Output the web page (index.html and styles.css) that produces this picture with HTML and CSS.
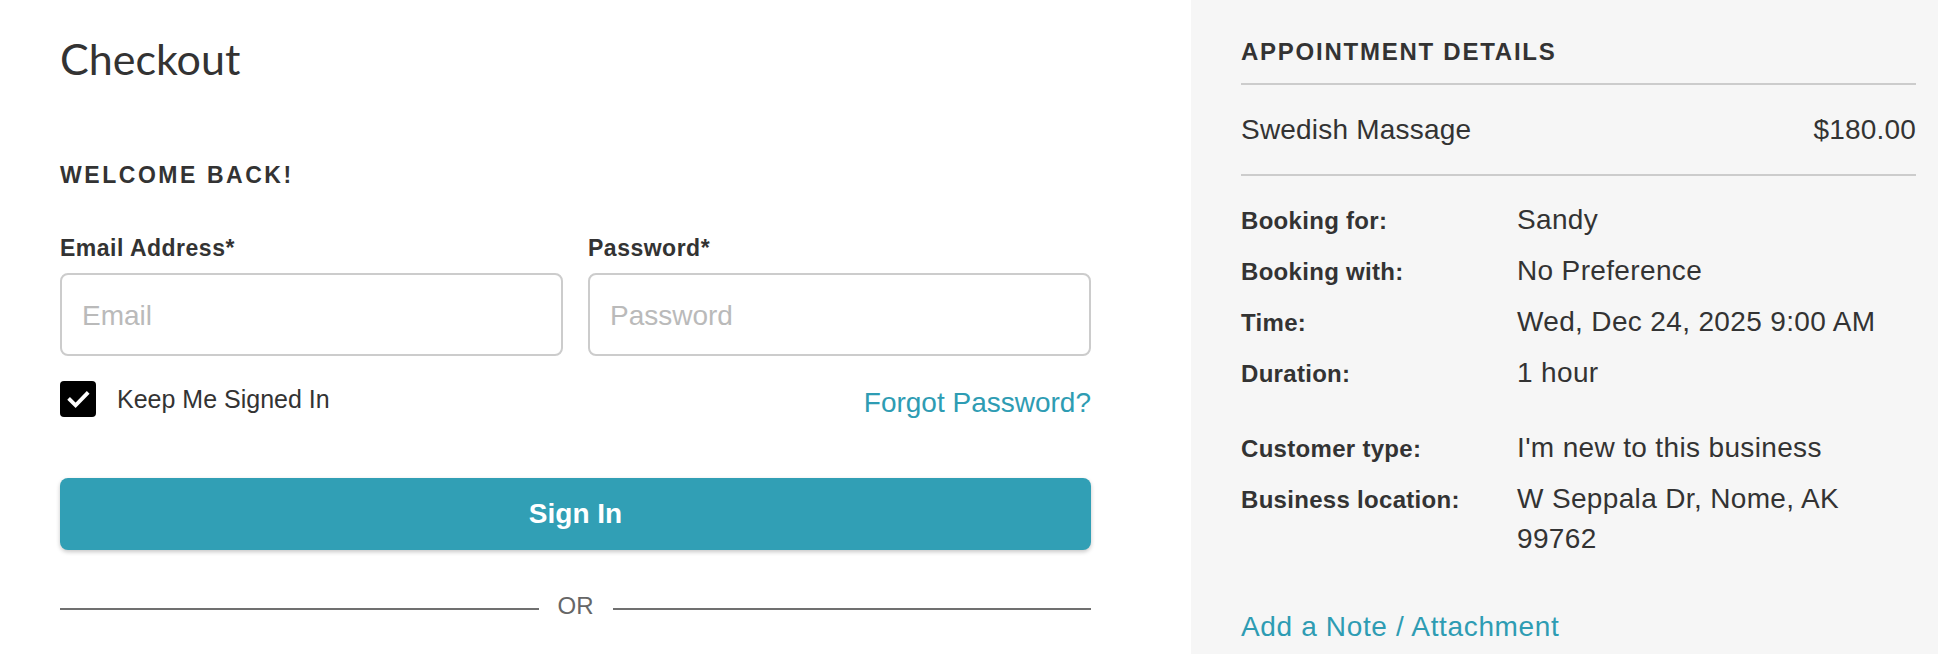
FILE: index.html
```html
<!DOCTYPE html>
<html lang="en">
<head>
<meta charset="utf-8">
<title>Checkout</title>
<link rel="stylesheet" href="styles.css">
</head>
<body>
<div class="page">
  <main class="main">
    <h1 class="title">Checkout</h1>
    <h2 class="section-title">WELCOME BACK!</h2>
    <form class="login">
      <div class="fields">
        <div class="field">
          <label class="field-label" for="email">Email Address*</label>
          <input class="field-input" id="email" type="email" placeholder="Email">
        </div>
        <div class="field">
          <label class="field-label" for="password">Password*</label>
          <input class="field-input" id="password" type="password" placeholder="Password">
        </div>
      </div>
      <div class="options">
        <label class="keep">
          <span class="checkbox">
            <svg class="checkbox-icon" viewBox="0 0 36 36" width="36" height="36" aria-hidden="true">
              <path d="M8.6 17.4 L15.6 24.4 L28.2 11.4" fill="none" stroke="#fff" stroke-width="3.8" stroke-linejoin="miter"/>
            </svg>
          </span>
          <span class="keep-text">Keep Me Signed In</span>
        </label>
        <a class="forgot" href="#">Forgot Password?</a>
      </div>
      <button class="signin" type="button">Sign In</button>
      <div class="divider">
        <span class="divider-line"></span>
        <span class="divider-text">OR</span>
        <span class="divider-line"></span>
      </div>
    </form>
  </main>
  <aside class="summary">
    <h2 class="summary-title">APPOINTMENT DETAILS</h2>
    <div class="service">
      <span class="service-name">Swedish Massage</span>
      <span class="service-price">$180.00</span>
    </div>
    <div class="details">
      <div class="detail-group">
        <div class="detail-row"><span class="detail-label">Booking for:</span><span class="detail-value">Sandy</span></div>
        <div class="detail-row"><span class="detail-label">Booking with:</span><span class="detail-value">No Preference</span></div>
        <div class="detail-row"><span class="detail-label">Time:</span><span class="detail-value">Wed, Dec 24, 2025 9:00 AM</span></div>
        <div class="detail-row"><span class="detail-label">Duration:</span><span class="detail-value">1 hour</span></div>
      </div>
      <div class="detail-group">
        <div class="detail-row"><span class="detail-label">Customer type:</span><span class="detail-value">I'm new to this business</span></div>
        <div class="detail-row"><span class="detail-label">Business location:</span><span class="detail-value">W Seppala Dr, Nome, AK 99762</span></div>
      </div>
    </div>
    <a class="note-link" href="#">Add a Note / Attachment</a>
  </aside>
</div>
</body>
</html>
```

FILE: styles.css
```css
* {
  box-sizing: border-box;
}

html, body {
  margin: 0;
  padding: 0;
}

body {
  font-family: "Liberation Sans", Arial, Helvetica, sans-serif;
  color: #333333;
  background: #ffffff;
}

.page {
  display: flex;
  height: 100vh;
  overflow: hidden;
}

/* ---------- left column ---------- */
.main {
  width: 1191px;
  flex: none;
  padding: 35px 100px 0 60px;
}

.title {
  margin: 0;
  font-family: Lato, "Open Sans", sans-serif;
  font-weight: 400;
  font-size: 43px;
  line-height: 48px;
  color: #333333;
}

.section-title {
  margin: 78px 0 0;
  font-size: 23px;
  line-height: 28px;
  font-weight: 700;
  letter-spacing: 2.55px;
  color: #333333;
}

.login {
  margin: 0;
}

.fields {
  display: grid;
  grid-template-columns: 1fr 1fr;
  column-gap: 25px;
  margin-top: 46px;
}

.field {
  display: flex;
  flex-direction: column;
}

.field-label {
  font-size: 23px;
  line-height: 26px;
  font-weight: 700;
  letter-spacing: 0.5px;
  color: #333333;
}

.field-input {
  margin-top: 12px;
  height: 83px;
  width: 100%;
  border: 2px solid #cccccc;
  border-radius: 8px;
  padding: 2px 20px 0;
  font-family: "Liberation Sans", Arial, sans-serif;
  font-size: 28px;
  color: #333333;
  background: #ffffff;
  outline: none;
}

.field-input::placeholder {
  color: #bababa;
  opacity: 1;
}

.options {
  display: flex;
  justify-content: space-between;
  align-items: flex-start;
  margin-top: 25px;
}

.keep {
  display: flex;
  align-items: flex-start;
  gap: 21px;
}

.checkbox {
  width: 36px;
  height: 36px;
  border-radius: 4px;
  background: #000000;
  display: block;
  flex: none;
}

.checkbox-icon {
  display: block;
}

.keep-text {
  font-size: 25px;
  line-height: 28px;
  margin-top: 4px;
  color: #333333;
}

.forgot {
  font-size: 28px;
  line-height: 32px;
  margin-top: 6px;
  color: #2e9cb3;
  text-decoration: none;
}

.signin {
  display: block;
  width: 100%;
  height: 72px;
  margin-top: 59px;
  border: none;
  border-radius: 8px;
  background: #319fb5;
  color: #ffffff;
  font-family: "Liberation Sans", Arial, sans-serif;
  font-weight: 700;
  font-size: 28px;
  box-shadow: 0 2px 4px rgba(0, 0, 0, 0.22);
  cursor: pointer;
}

.divider {
  display: flex;
  align-items: center;
  margin-top: 42px;
}

.divider-line {
  flex: 1;
  height: 2px;
  margin-top: 5px;
  background: #707070;
}

.divider-text {
  padding: 0 19px 0 19px;
  font-size: 24px;
  line-height: 28px;
  color: #666666;
}

/* ---------- right column ---------- */
.summary {
  flex: 1;
  background: #f6f6f6;
  padding: 38px 22px 0 50px;
}

.summary-title {
  margin: 0;
  padding-bottom: 17px;
  border-bottom: 2px solid #cccccc;
  font-size: 24px;
  line-height: 28px;
  font-weight: 700;
  letter-spacing: 1.75px;
  color: #333333;
}

.service {
  display: flex;
  justify-content: space-between;
  padding: 28px 0 27px;
  border-bottom: 2px solid #cccccc;
  font-size: 28px;
  line-height: 34px;
  letter-spacing: 0.2px;
}

.details {
  margin-top: 24px;
}

.detail-group + .detail-group {
  margin-top: 35px;
}

.detail-row {
  display: grid;
  grid-template-columns: 276px 385px;
  align-items: baseline;
  margin-bottom: 11px;
}

.detail-label {
  font-size: 24px;
  font-weight: 700;
  letter-spacing: 0.3px;
  line-height: 30px;
}

.detail-value {
  font-size: 28px;
  line-height: 40px;
  letter-spacing: 0.35px;
}

.note-link {
  display: block;
  margin-top: 51px;
  font-size: 28px;
  line-height: 34px;
  letter-spacing: 0.65px;
  color: #2e9cb3;
  text-decoration: none;
}
```
